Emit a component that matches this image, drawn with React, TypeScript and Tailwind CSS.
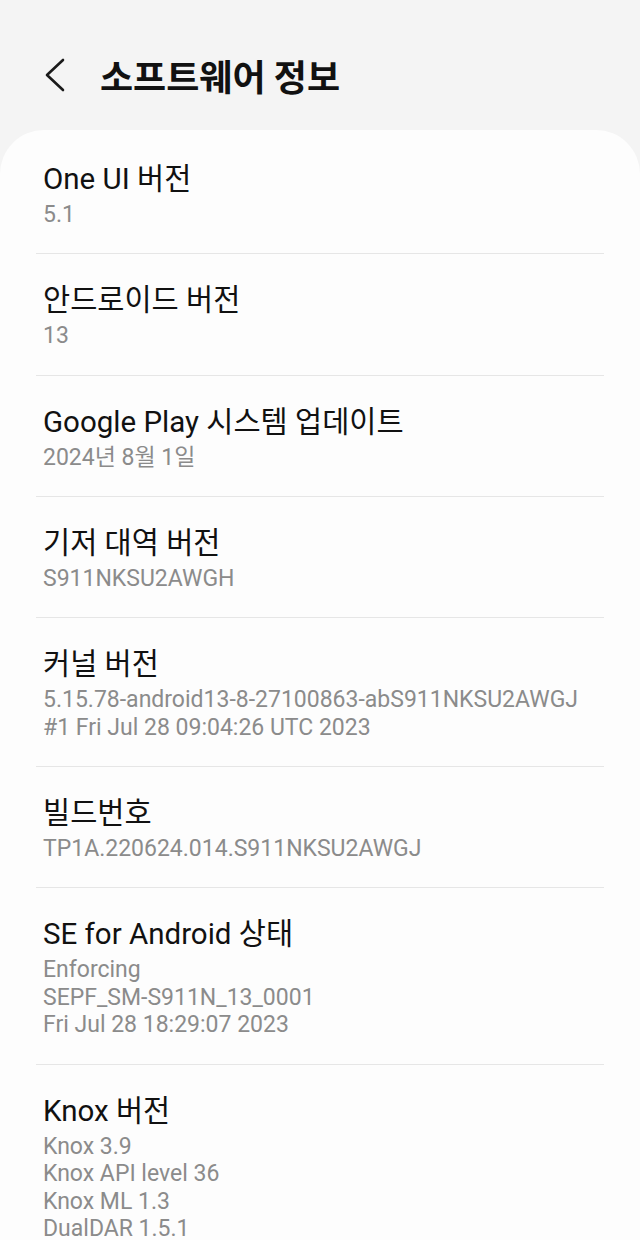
import React from "react";

type InfoRow = {
	title: string;
	lines: string[];
};

const rows: InfoRow[] = [
	{ title: "One UI 버전", lines: ["5.1"] },
	{ title: "안드로이드 버전", lines: ["13"] },
	{ title: "Google Play 시스템 업데이트", lines: ["2024년 8월 1일"] },
	{ title: "기저 대역 버전", lines: ["S911NKSU2AWGH"] },
	{
		title: "커널 버전",
		lines: [
			"5.15.78-android13-8-27100863-abS911NKSU2AWGJ",
			"#1 Fri Jul 28 09:04:26 UTC 2023",
		],
	},
	{ title: "빌드번호", lines: ["TP1A.220624.014.S911NKSU2AWGJ"] },
	{
		title: "SE for Android 상태",
		lines: ["Enforcing", "SEPF_SM-S911N_13_0001", "Fri Jul 28 18:29:07 2023"],
	},
	{
		title: "Knox 버전",
		lines: ["Knox 3.9", "Knox API level 36", "Knox ML 1.3", "DualDAR 1.5.1"],
	},
];

const BackIcon = () => (
	<svg
		width="24"
		height="36"
		viewBox="0 0 24 36"
		fill="none"
		stroke="#1a1a1a"
		strokeWidth="2.6"
		strokeLinecap="round"
		strokeLinejoin="round">
		<path d="M19 3 L3 18 L19 33" />
	</svg>
);

export default function App() {
	return (
		<div className="h-[1240px] w-[640px] overflow-hidden bg-[#f4f4f4] font-['Roboto','Noto_Sans_CJK_KR',sans-serif]">
			{/* header */}
			<div className="flex h-[130px] items-center px-[44px] pt-[20px]">
				<BackIcon />
				<h1 className="ml-[32px] font-['Noto_Sans_CJK_KR',sans-serif] text-[36px] font-bold leading-none text-[#111111]">
					소프트웨어 정보
				</h1>
			</div>

			{/* card */}
			<div className="rounded-t-[44px] bg-[#fdfdfd] pt-[3px]">
				{rows.map((row, index) => (
					<div
						key={index}
						className={`mx-[36px] px-[7px] pt-[25px] pb-[24.8px] ${
							index < rows.length - 1 ? "border-b border-[#e6e6e6]" : ""
						}`}>
						<div className="text-[29.5px] leading-[43px] text-[#111111]">
							{row.title}
						</div>
						{row.lines.map((line, i) => (
							<div
								key={i}
								className="text-[23px] leading-[27.5px] text-[#8b8b8b]">
								{line}
							</div>
						))}
					</div>
				))}
			</div>
		</div>
	);
}
